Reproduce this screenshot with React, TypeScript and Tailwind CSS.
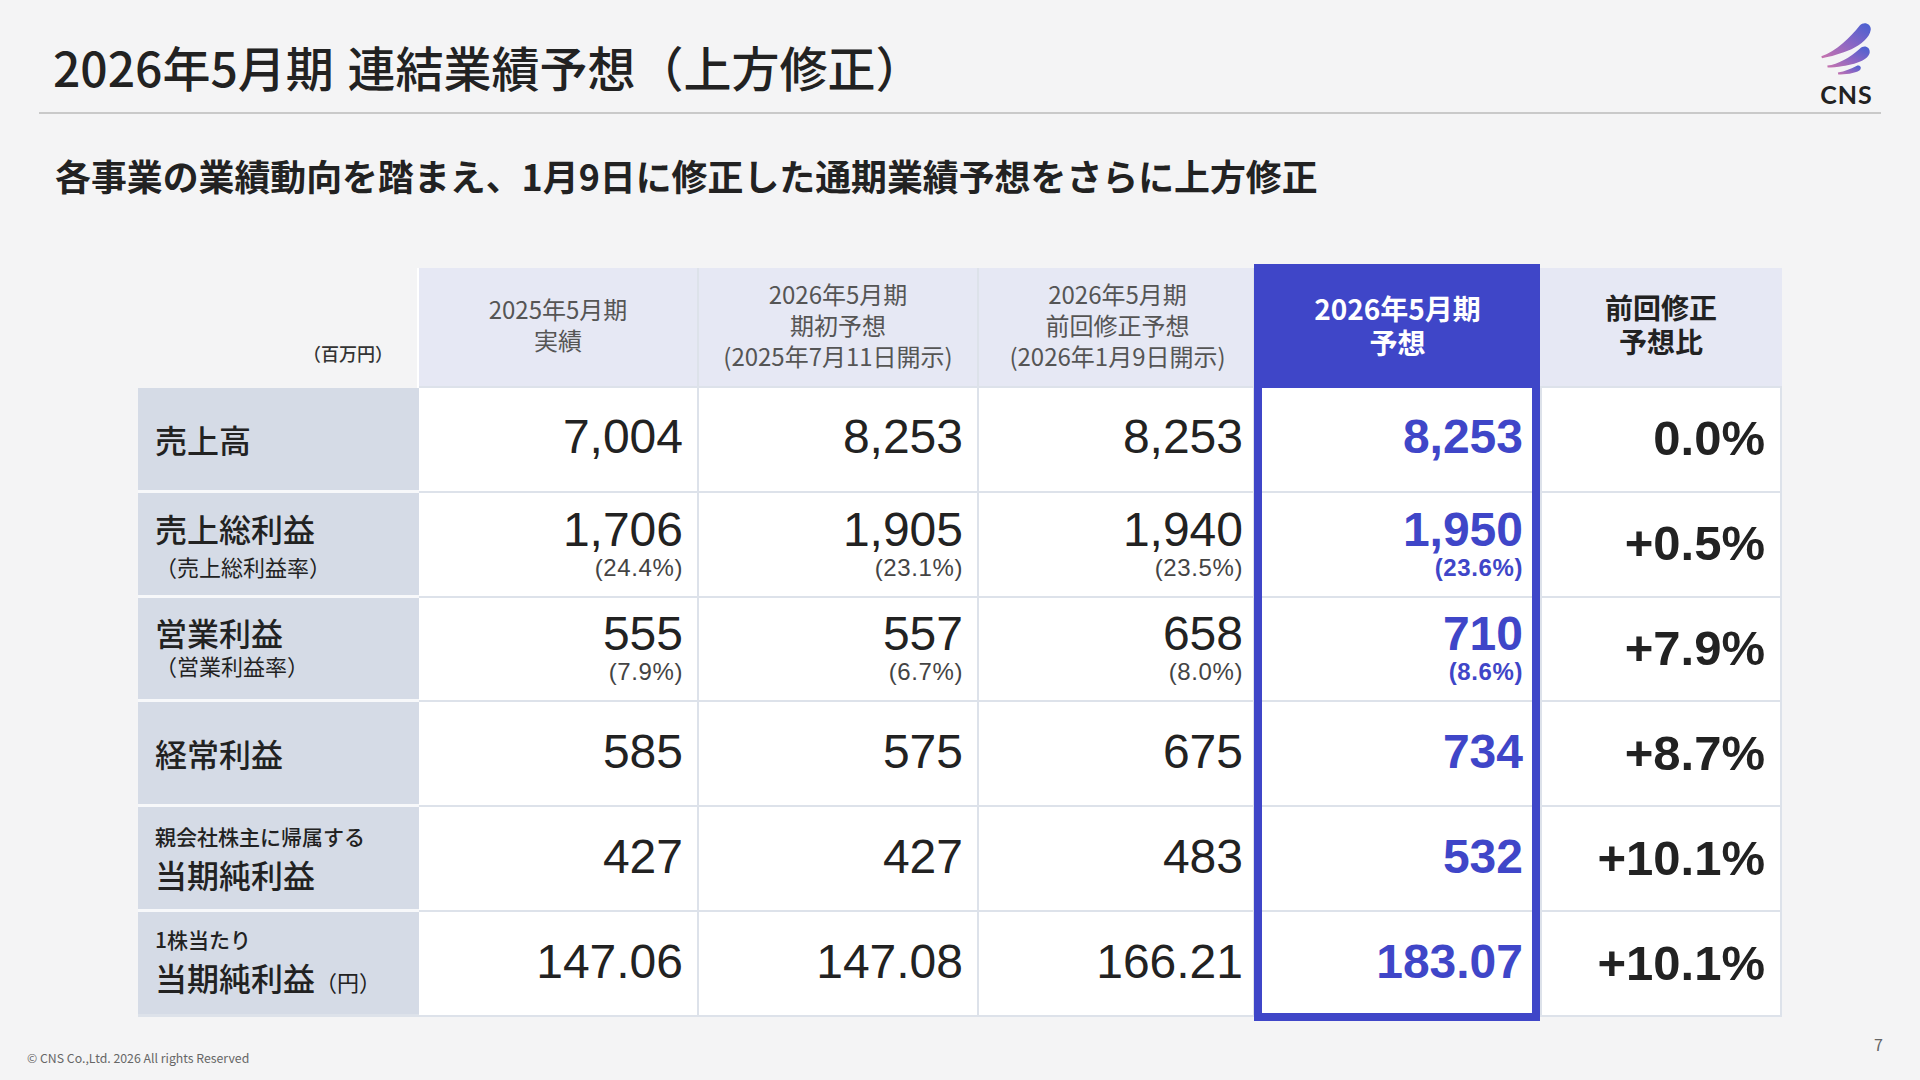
const jp = "font-['Noto_Sans_CJK_JP','Noto_Sans',sans-serif]"
const num = "font-['Liberation_Sans','Noto_Sans_CJK_JP',sans-serif]"

const rows = [
  { label: "売上高", values: ["7,004", "8,253", "8,253"], forecast: "8,253", ratio: "0.0%" },
  {
    label: "売上総利益",
    sub: "（売上総利益率）",
    labelClass: "pb-[2px]",
    subClass: "mt-[2px]",
    valueClass: "pt-[2px]",
    values: ["1,706", "1,905", "1,940"],
    rates: ["(24.4%)", "(23.1%)", "(23.5%)"],
    forecast: "1,950",
    forecastRate: "(23.6%)",
    ratio: "+0.5%",
  },
  {
    label: "営業利益",
    sub: "（営業利益率）",
    labelClass: "pb-[8px]",
    subClass: "mt-[-3px]",
    values: ["555", "557", "658"],
    rates: ["(7.9%)", "(6.7%)", "(8.0%)"],
    forecast: "710",
    forecastRate: "(8.6%)",
    ratio: "+7.9%",
  },
  { label: "経常利益", values: ["585", "575", "675"], forecast: "734", ratio: "+8.7%" },
  { pre: "親会社株主に帰属する", label: "当期純利益", values: ["427", "427", "483"], forecast: "532", ratio: "+10.1%" },
  { pre: "1株当たり", label: "当期純利益", unit: "（円）", values: ["147.06", "147.08", "166.21"], forecast: "183.07", ratio: "+10.1%" },
]

function Logo() {
  return (
    <div className="flex flex-col items-center w-[53px] mb-[8px]">
      <svg viewBox="120 35 160 165" className="w-[53px] h-[55px]">
        <defs>
          <linearGradient id="swoosh" x1="0" y1="1" x2="1" y2="0">
            <stop offset="0" stopColor="#c774ae" />
            <stop offset="0.5" stopColor="#8a66c4" />
            <stop offset="1" stopColor="#4660d2" />
          </linearGradient>
        </defs>
        <path fill="url(#swoosh)" d="M124 141 C170 125 210 85 240 48 C252 34 276 42 273 62 C270 85 245 105 215 120 C185 133 150 143 126 147 Z" />
        <path fill="url(#swoosh)" d="M142 169 C175 165 210 145 240 118 C252 106 272 112 270 130 C266 152 225 165 190 170 C172 173 155 175 143 175 Z" />
        <path fill="url(#swoosh)" d="M174 190 C195 186 215 178 230 170 C240 165 248 175 240 183 C225 193 195 196 175 196 Z" />
      </svg>
      <div className="font-['Lato',sans-serif] font-bold text-[25px] leading-[20px] tracking-[1px] text-[#222] mt-[8px]">CNS</div>
    </div>
  )
}

function HeaderCell({ lines, className }: { lines: string[]; className?: string }) {
  return (
    <div className={`${jp} bg-[#e6e8f4] border-r-2 border-b-2 border-[#dde2ea] flex flex-col items-center justify-center pb-[6px] text-[24px] leading-[31px] text-[#555] whitespace-nowrap ${className ?? ""}`}>
      {lines.map((l) => (
        <div key={l}>{l}</div>
      ))}
    </div>
  )
}

function ValueCell({ value, rate, pad, extra }: { value: string; rate?: string; pad: string; extra?: string }) {
  return (
    <div className={`bg-white border-r-2 border-b-2 border-[#dde2ea] flex flex-col justify-center items-end text-[#222] ${pad} ${extra ?? ""} ${rate ? "" : "pb-[4px]"}`}>
      <div className={`${num} text-[48px] leading-[44px]`}>{value}</div>
      {rate && <div className={`${num} text-[24px] leading-[30px] tracking-[0.6px] mt-[1px] text-[#444]`}>{rate}</div>}
    </div>
  )
}

export default function App() {
  return (
    <div className="w-[1920px] h-[1080px] bg-[#f4f4f5] flex flex-col overflow-hidden">
      <div className="mx-[39px] h-[114px] border-b-2 border-[#c9c9c9] flex justify-between items-end pl-[14px] pr-[8px]">
        <h1 className={`${jp} font-medium text-[48px] leading-[60px] [word-spacing:3px] text-[#222] mb-[16px] whitespace-nowrap`}>
          2026年5月期 連結業績予想（上方修正）
        </h1>
        <Logo />
      </div>

      <p className={`${jp} font-bold text-[35.9px] leading-[50px] text-[#222] ml-[55px] mt-[36px] whitespace-nowrap`}>
        各事業の業績動向を踏まえ、1月9日に修正した通期業績予想をさらに上方修正
      </p>

      <div className="relative ml-[138px] mt-[68px] w-[1644px]">
        <div className="grid grid-cols-[281px_280px_280px_276px_285px_242px] grid-rows-[120px_repeat(6,104.83px)]">
          <div className={`${jp} font-medium border-r-2 border-white flex items-end justify-end pr-[24px] pb-[23px] text-[18px] leading-[24px] text-[#333]`}>（百万円）</div>
          <HeaderCell lines={["2025年5月期", "実績"]} />
          <HeaderCell lines={["2026年5月期", "期初予想", "(2025年7月11日開示)"]} />
          <HeaderCell lines={["2026年5月期", "前回修正予想", "(2026年1月9日開示)"]} className="pl-[3px]" />
          <div className={`${jp} font-bold bg-[#3f46c8] text-white flex flex-col items-center justify-center pb-[6px] text-[28px] leading-[34px]`}>
            <div>2026年5月期</div>
            <div>予想</div>
          </div>
          <div className={`${jp} font-bold bg-[#e6e8f4] border-b-2 border-[#dde2ea] text-[#222] flex flex-col items-center justify-center pb-[6px] text-[28px] leading-[34px]`}>
            <div>前回修正</div>
            <div>予想比</div>
          </div>

          {rows.map((r, ri) => (
            <div key={r.label + r.values[0]} className="contents">
              <div className={`${jp} bg-[#d5dbe6] border-b-[3px] ${ri === 5 ? "border-[#dde2ea]" : "border-[#f7f8fa]"} flex flex-col justify-center pl-[17px] text-[#222] whitespace-nowrap ${r.labelClass ?? ""}`}>
                {r.pre && <div className="text-[21px] leading-[32px] font-medium">{r.pre}</div>}
                <div className="text-[32px] leading-[44px] font-medium">
                  {r.label}
                  {r.unit && <span className="text-[22px] font-normal">{r.unit}</span>}
                </div>
                {r.sub && <div className={`text-[22px] leading-[28px] ${r.subClass ?? ""}`}>{r.sub}</div>}
              </div>
              {r.values.map((v, i) => (
                <ValueCell key={i} value={v} rate={r.rates?.[i]} pad={i === 2 ? "pr-[10px]" : "pr-[14px]"} extra={r.valueClass} />
              ))}
              <div className={`bg-white border-b-2 border-[#dde2ea] flex flex-col justify-center items-end pr-[17px] text-[#3f46c8] ${r.valueClass ?? ""} ${r.forecastRate ? "" : "pb-[4px]"}`}>
                <div className={`${num} font-bold text-[48px] leading-[44px]`}>{r.forecast}</div>
                {r.forecastRate && <div className={`${num} font-bold text-[24px] leading-[30px] tracking-[0.6px] mt-[1px]`}>{r.forecastRate}</div>}
              </div>
              <div className="bg-white border-x-2 border-b-2 border-[#dde2ea] flex items-center justify-end pr-[15px] pb-[2px]">
                <div className={`${num} font-bold text-[49px] leading-[44px] text-[#222]`}>{r.ratio}</div>
              </div>
            </div>
          ))}
        </div>
        {/* highlight frame sits over the forecast column */}
        <div className="absolute left-[1116px] top-[-4px] w-[286px] h-[757px] border-8 border-[#3f46c8] pointer-events-none" />
      </div>

      <div className="mt-auto flex justify-between items-end pl-[27px] pr-[37px] pb-[12px]">
        <div className={`${jp} text-[12.3px] leading-[20px] text-[#666]`}>© CNS Co.,Ltd. 2026 All rights Reserved</div>
        <div className={`${jp} text-[16px] leading-[24px] text-[#666] mb-[12px]`}>7</div>
      </div>
    </div>
  )
}
